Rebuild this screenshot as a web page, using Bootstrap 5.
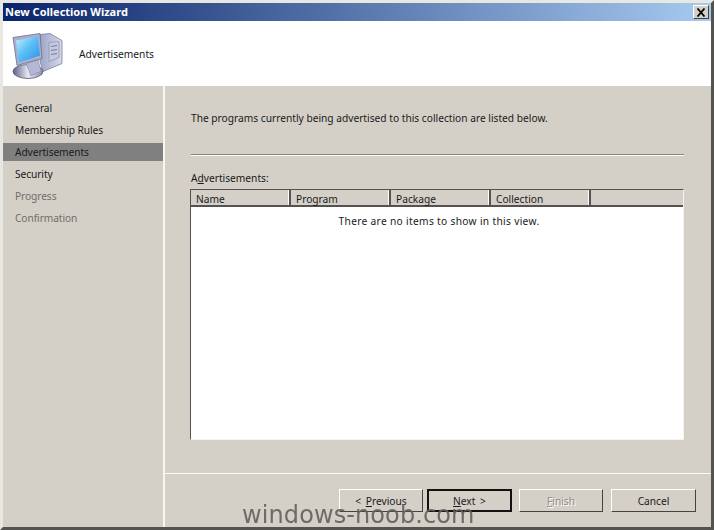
<!DOCTYPE html>
<html lang="en">
<head>
<meta charset="utf-8">
<title>New Collection Wizard</title>
<link href="https://cdn.jsdelivr.net/npm/bootstrap@5.3.0/dist/css/bootstrap.min.css" rel="stylesheet">
<style>
html,body{margin:0;width:714px;height:530px;overflow:hidden;background:#d4d0c8;}
body{font-family:"Noto Sans","Liberation Sans",sans-serif;font-size:10.2px;line-height:14px;color:#1a1a1a;}
.wiz-window{width:714px;height:530px;border-style:solid;border-width:3px 3px 3px 3px;border-color:#e9e7e2 #55534f #55534f #e9e7e2;background:#d4d0c8;position:relative;}
.wiz-title{height:18px;background:linear-gradient(90deg,#0a246a 0%,#a6caf0 100%);color:#fff;font-weight:700;font-size:11px;padding-left:2px;flex:none;}
.wiz-close{width:16px;height:14px;background:#d4d0c8;border:1px solid;border-color:#fff #404040 #404040 #fff;margin-right:2px;padding:0;}
.wiz-head{height:65px;background:#fff;flex:none;padding-left:9px;gap:15px;}
.wiz-headtext{padding-top:1px;font-size:10.2px;}
.wiz-side{width:160px;flex:none;padding-top:11px;font-size:10.2px;}
.wiz-step{height:22px;padding-left:12px;display:flex;align-items:center;letter-spacing:-.08px;}
.wiz-step.is-on{background:#808080;height:18px;margin:2px 0;}
.wiz-step.is-off{color:#6e6e6a;}
.wiz-main{border-left:2px solid #f7f6f3;min-width:0;}
.wiz-body{padding:25px 27px 0 26px;height:387px;flex:none;}
.wiz-rule{height:2px;border-top:1px solid #85837c;border-bottom:1px solid #fff;margin-top:29px;}
.wiz-label{margin-top:15px;height:14px;}
.wiz-list{height:251px;margin-top:4px;margin-left:-1px;border:1px solid;border-color:#55534f #f4f3ef #f4f3ef #55534f;background:#fff;}
.wiz-cols{height:17px;background:#d4d0c8;border-bottom:2px solid #55534f;}
.wiz-col{width:100px;flex:none;padding:1px 0 0 5px;line-height:17px;border-right:2px solid;border-right-color:#55534f;box-shadow:inset -1px 0 0 #fff;}
.wiz-col-last{flex:1 1 0;padding:0;border:0;box-shadow:none;}
.wiz-empty{padding:7px 0 0 4px;text-align:center;letter-spacing:.32px;}
.wiz-foot{border-top:1px solid #fbfaf8;padding:15px 15px 0 0;flex:1 1 0;justify-content:flex-end;align-items:flex-start;}
.wiz-btn{height:23px;width:85px;font-size:10.2px;line-height:14px;padding:0;background:#d4d0c8;color:#1a1a1a;border:1px solid;border-color:#fff #45433f #45433f #fff;border-radius:0;word-spacing:2px;}
.wiz-btn.is-first{width:84px;margin-right:4px;}
.wiz-btn.is-main{border:2px solid #111;margin-right:7px;}
.wiz-btn.is-third{width:84px;margin-right:8px;}
.wiz-btn:disabled{color:#8f8d88;text-shadow:1px 1px 0 #fff;opacity:1;background:#d4d0c8;border-color:#fff #45433f #45433f #fff;}
.wiz-mark{position:absolute;left:242px;top:501px;font-family:"DejaVu Sans",sans-serif;font-size:24px;line-height:28px;color:#63615d;opacity:.9;letter-spacing:.1px;white-space:nowrap;pointer-events:none;}
</style>
</head>
<body>
<div class="wiz-window d-flex flex-column">
  <div class="wiz-title d-flex align-items-center justify-content-between">
    <span>New Collection Wizard</span>
    <button class="wiz-close d-flex align-items-center justify-content-center" type="button" aria-label="Close">
      <svg width="10" height="9" viewBox="0 0 10 9"><path d="M1.5 .5 8.5 8.5M8.5 .5 1.5 8.5" stroke="#000" stroke-width="1.8" fill="none"/></svg>
    </button>
  </div>
  <div class="wiz-head d-flex align-items-center">
    <svg width="52" height="52" viewBox="0 0 52 52">
      <defs>
        <linearGradient id="scr" x1="0" y1="0" x2="1" y2="1"><stop offset="0" stop-color="#c9efff"/><stop offset=".45" stop-color="#5cc0f6"/><stop offset="1" stop-color="#2a8ee6"/></linearGradient>
        <linearGradient id="cas" x1="0" y1="0" x2="1" y2="0"><stop offset="0" stop-color="#9ea6c8"/><stop offset="1" stop-color="#d5d9ea"/></linearGradient>
        <linearGradient id="bas" x1="0" y1="0" x2="1" y2="0"><stop offset="0" stop-color="#5f6186"/><stop offset=".5" stop-color="#e6e8f4"/><stop offset="1" stop-color="#8a8dac"/></linearGradient>
      </defs>
      <g transform="translate(0 2.5)">
        <path d="M28 4 38 3 50 10 50 33 31 41 28 31Z" fill="url(#cas)" stroke="#7a7f9f" stroke-width=".8"/>
        <path d="M37 12 47 11V27L37 31Z" fill="#c4c9e0" stroke="#8a8eac" stroke-width=".7"/>
        <path d="M39 16 45 15M39 20 45 19M39 24 45 23" stroke="#777b9c"/>
        <ellipse cx="16" cy="41" rx="15" ry="7" fill="url(#bas)" stroke="#56587a" stroke-width=".8"/>
        <path d="M14 33 26 29 29 41 19 45Z" fill="#b5b8d2" stroke="#8287a8" stroke-width=".6"/>
        <path d="M1 7 28 3 30 28 5 35Z" fill="#a9b0cc" stroke="#686d92" stroke-width=".8"/>
        <path d="M4 10 26 6 28 25 7 32Z" fill="url(#scr)"/>
      </g>
    </svg>
    <span class="wiz-headtext">Advertisements</span>
  </div>
  <div class="d-flex flex-grow-1" style="min-height:0">
    <nav class="wiz-side">
      <div class="wiz-step">General</div>
      <div class="wiz-step">Membership Rules</div>
      <div class="wiz-step is-on">Advertisements</div>
      <div class="wiz-step">Security</div>
      <div class="wiz-step is-off">Progress</div>
      <div class="wiz-step is-off">Confirmation</div>
    </nav>
    <div class="wiz-main d-flex flex-column flex-grow-1">
      <div class="wiz-body">
        <div>The programs currently being advertised to this collection are listed below.</div>
        <div class="wiz-rule"></div>
        <div class="wiz-label">A<u>d</u>vertisements:</div>
        <div class="wiz-list d-flex flex-column">
          <div class="wiz-cols d-flex">
            <div class="wiz-col">Name</div>
            <div class="wiz-col">Program</div>
            <div class="wiz-col">Package</div>
            <div class="wiz-col">Collection</div>
            <div class="wiz-col wiz-col-last"></div>
          </div>
          <div class="wiz-empty">There are no items to show in this view.</div>
        </div>
      </div>
      <div class="wiz-foot d-flex">
        <button class="btn wiz-btn is-first" type="button">&lt; <u>P</u>revious</button>
        <button class="btn wiz-btn is-main" type="button"><u>N</u>ext &gt;</button>
        <button class="btn wiz-btn is-third" type="button" disabled><u>F</u>inish</button>
        <button class="btn wiz-btn" type="button">Cancel</button>
      </div>
    </div>
  </div>
</div>
<div class="wiz-mark">windows-noob.com</div>
</body>
</html>
